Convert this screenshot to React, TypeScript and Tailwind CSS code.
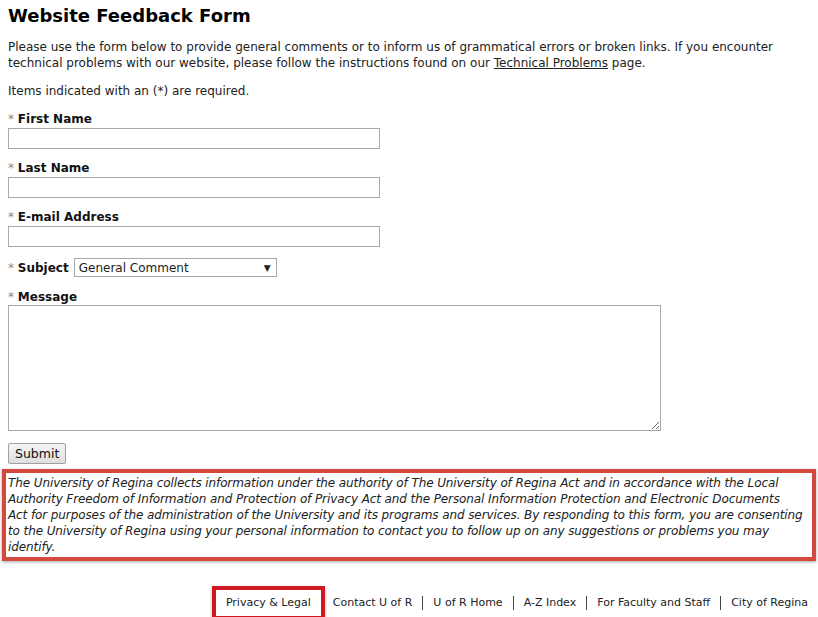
import React from "react";

const font = { fontFamily: '"DejaVu Sans", Verdana, sans-serif' };

function Label({ text }: { text: string }) {
  return (
    <div className="text-[12px] leading-[16px] text-[#111]">
      <span className="text-[#888]">*</span> <span className="font-bold">{text}</span>
    </div>
  );
}

const footerLinks = ["Contact U of R", "U of R Home", "A-Z Index", "For Faculty and Staff", "City of Regina"];

export default function App() {
  return (
    <div className="h-[617px] w-[818px] overflow-hidden bg-white text-[#222]" style={font}>
      <div className="px-2 pt-[4px]">
        <h1 className="text-[18px] font-bold leading-[24px] text-black">Website Feedback Form</h1>
        <p className="mt-[11px] whitespace-nowrap text-[12px] leading-[16px]">
          Please use the form below to provide general comments or to inform us of grammatical errors or broken links. If you encounter
          <br />
          technical problems with our website, please follow the instructions found on our{" "}
          <a className="underline">Technical Problems</a> page.
        </p>
        <p className="mt-[12px] text-[12px] leading-[16px]">Items indicated with an (*) are required.</p>

        <div className="mt-[12px]">
          <Label text="First Name" />
          <input className="mt-[1px] block h-[21px] w-[372px] border border-[#a9a9a9] bg-white" />
        </div>
        <div className="mt-[11px]">
          <Label text="Last Name" />
          <input className="mt-[1px] block h-[21px] w-[372px] border border-[#a9a9a9] bg-white" />
        </div>
        <div className="mt-[11px]">
          <Label text="E-mail Address" />
          <input className="mt-[1px] block h-[21px] w-[372px] border border-[#a9a9a9] bg-white" />
        </div>
        <div className="mt-[11px] flex items-center gap-[5px] text-[12px] leading-[16px]">
          <span>
            <span className="text-[#888]">*</span> <span className="font-bold text-[#111]">Subject</span>
          </span>
          <div className="flex h-[19px] w-[203px] items-center justify-between border border-[#a9a9a9] pl-[4px] pr-[5px] text-[12px]">
            <span>General Comment</span>
            <span className="text-[9px]">▼</span>
          </div>
        </div>
        <div className="mt-[12px]">
          <Label text="Message" />
          <textarea className="block h-[126px] w-[653px] resize border border-[#a9a9a9] bg-white" />
        </div>
        <button
          type="button"
          className="mt-[12px] block h-[21px] rounded-[2px] border border-[#a0a0a0] bg-gradient-to-b from-[#f6f6f6] to-[#dedede] px-[6px] text-[12.5px] leading-[19px] text-[#111]"
        >
          Submit
        </button>
      </div>

      <div className="mx-[2px] mt-[5px] w-[814px] border-[4px] border-[#d4493e] px-[2px] py-[2px] shadow-[0_1px_3px_rgba(0,0,0,0.35)]">
        <p className="whitespace-nowrap text-[12px] italic leading-[16px] tracking-[-0.1px] text-[#222]">
          The University of Regina collects information under the authority of The University of Regina Act and in accordance with the Local
          <br />
          Authority Freedom of Information and Protection of Privacy Act and the Personal Information Protection and Electronic Documents
          <br />
          Act for purposes of the administration of the University and its programs and services. By responding to this form, you are consenting
          <br />
          to the University of Regina using your personal information to contact you to follow up on any suggestions or problems you may
          <br />
          identify.
        </p>
      </div>

      <div className="mt-[25px] flex items-start justify-end text-[11px] leading-[14px] text-[#222]">
        <div className="border-[4px] border-[#d01820] px-[10px] py-[6px] shadow-[0_1px_3px_rgba(0,0,0,0.3)]">Privacy &amp; Legal</div>
        <div className="flex items-center pt-[10px]">
          {footerLinks.map((l, i) => (
            <span key={l} className={`${i === 0 ? "pl-[8px]" : "border-l border-[#444] pl-[10px]"} pr-[10px]`}>
              {l}
            </span>
          ))}
        </div>
      </div>
    </div>
  );
}
